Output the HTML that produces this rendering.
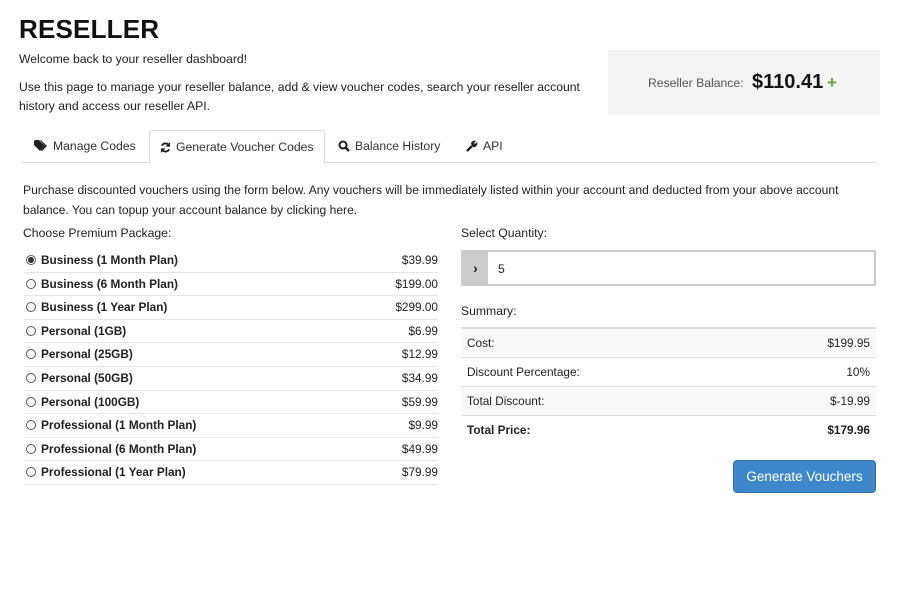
<!DOCTYPE html>
<html><head><style>
*{margin:0;padding:0;box-sizing:border-box}
body{width:900px;height:592px;background:#fff;font-family:"Liberation Sans",sans-serif;color:#222;font-size:12px;position:relative;overflow:hidden}
.a{position:absolute;white-space:nowrap}
h1{position:absolute;left:19px;top:14px;font-size:26px;font-weight:bold;color:#111;letter-spacing:0.2px}
.bal{position:absolute;left:608px;top:50px;width:272px;height:65px;background:#f4f4f4}
.tabs{position:absolute;left:22px;top:162px;width:854px;border-top:1px solid #ddd}
.tab{position:absolute;top:130px;height:33px;line-height:32px;font-size:12.2px;color:#333}
.tab svg{vertical-align:-2px;margin-right:5px}
.act{border:1px solid #ddd;border-bottom:1px solid #fff;background:#fff;border-radius:3px 3px 0 0;height:34px}
.row{position:absolute;left:24px;width:414px;height:23.6px;border-bottom:1px solid #e6e6e6;font-weight:bold;font-size:11.8px}
.row span.p{position:absolute;right:0;top:4px;font-weight:normal}
.row span.n{position:absolute;left:17px;top:4px}
.rad{position:absolute;left:2px;top:6px;width:10px;height:10px;border:1px solid #555;border-radius:50%}
.srow{position:absolute;left:461px;width:415px;height:29px;border-top:1px solid #ddd;font-size:11.8px}
.srow .l{position:absolute;left:6px;top:7px}.srow .r{position:absolute;right:6px;top:7px}
</style></head><body>
<h1>RESELLER</h1>
<div class="a" style="left:19px;top:52px;font-size:12.2px">Welcome back to your reseller dashboard!</div>
<div class="a" style="left:19px;top:78px;font-size:12.2px;line-height:19px">Use this page to manage your reseller balance, add &amp; view voucher codes, search your reseller account<br>history and access our reseller API.</div>
<div class="bal"><span class="a" style="left:40px;top:26px;font-size:12.2px;color:#555">Reseller Balance:</span><span class="a" style="left:144px;top:21px;font-size:20px;font-weight:bold;color:#111">$110.41</span><span class="a" style="left:219px;top:23px;font-size:17px;font-weight:bold;color:#5aa52a">+</span></div>
<div class="tabs"></div>
<div class="tab" style="left:34px"><svg width="14" height="12" viewBox="0 0 14 12"><path d="M0 1v4l6 6 5-5-6-6H1zM3 3a1 1 0 1 0 .01 0z" fill="#222"/><path d="M7 0l6 6-5 5-1-1 4-4-5-6z" fill="#222"/></svg>Manage Codes</div>
<div class="tab act" style="left:149px;width:176px;padding-left:10px"><svg width="11" height="11" viewBox="0 0 12 12"><path d="M10 4A4.5 4.5 0 0 0 2 4M2 8a4.5 4.5 0 0 0 8 0" stroke="#222" stroke-width="2" fill="none"/><path d="M11 0v5H6zM1 12V7h5z" fill="#222"/></svg>Generate Voucher Codes</div>
<div class="tab" style="left:338px"><svg width="12" height="12" viewBox="0 0 12 12"><circle cx="5" cy="5" r="3.5" stroke="#222" stroke-width="2" fill="none"/><path d="M7.5 7.5L11 11" stroke="#222" stroke-width="2.4"/></svg>Balance History</div>
<div class="tab" style="left:466px"><svg width="12" height="12" viewBox="0 0 12 12"><path d="M1 11L6 6" stroke="#222" stroke-width="2.4"/><path d="M5 4a3.5 3.5 0 0 1 5-3L8 3l1 1 2-2a3.5 3.5 0 0 1-4 5z" fill="#222"/></svg>API</div>
<div class="a" style="left:23px;top:180px;font-size:12.1px;line-height:20px">Purchase discounted vouchers using the form below. Any vouchers will be immediately listed within your account and deducted from your above account<br>balance. You can topup your account balance by clicking here.</div>
<div class="a" style="left:23px;top:226px;font-size:12.2px">Choose Premium Package:</div>
<div class="a" style="left:461px;top:226px;font-size:12.2px">Select Quantity:</div>
<div class="row" style="top:249px"><div class="rad"><div style="width:6px;height:6px;background:#333;border-radius:50%;margin:1px"></div></div><span class="n">Business (1 Month Plan)</span><span class="p">$39.99</span></div>
<div class="row" style="top:272.6px"><div class="rad"></div><span class="n">Business (6 Month Plan)</span><span class="p">$199.00</span></div>
<div class="row" style="top:296.2px"><div class="rad"></div><span class="n">Business (1 Year Plan)</span><span class="p">$299.00</span></div>
<div class="row" style="top:319.8px"><div class="rad"></div><span class="n">Personal (1GB)</span><span class="p">$6.99</span></div>
<div class="row" style="top:343.4px"><div class="rad"></div><span class="n">Personal (25GB)</span><span class="p">$12.99</span></div>
<div class="row" style="top:367px"><div class="rad"></div><span class="n">Personal (50GB)</span><span class="p">$34.99</span></div>
<div class="row" style="top:390.6px"><div class="rad"></div><span class="n">Personal (100GB)</span><span class="p">$59.99</span></div>
<div class="row" style="top:414.2px"><div class="rad"></div><span class="n">Professional (1 Month Plan)</span><span class="p">$9.99</span></div>
<div class="row" style="top:437.8px"><div class="rad"></div><span class="n">Professional (6 Month Plan)</span><span class="p">$49.99</span></div>
<div class="row" style="top:461.4px"><div class="rad"></div><span class="n">Professional (1 Year Plan)</span><span class="p">$79.99</span></div>
<div class="a" style="left:461px;top:250px;width:415px;height:36px;border:2px solid #ccc;background:#fff"><div style="position:absolute;left:0;top:0;width:25px;height:32px;background:#ccc;text-align:center;line-height:32px;font-weight:bold;font-size:14px">&#8250;</div><span class="a" style="left:35px;top:10px;font-size:12.2px">5</span></div>
<div class="a" style="left:461px;top:304px;font-size:12.2px">Summary:</div>
<div class="srow" style="top:327px;background:#f9f9f9;border-top:2px solid #ddd"><span class="l">Cost:</span><span class="r">$199.95</span></div>
<div class="srow" style="top:357px"><span class="l">Discount Percentage:</span><span class="r">10%</span></div>
<div class="srow" style="top:386px;background:#f9f9f9"><span class="l">Total Discount:</span><span class="r">$-19.99</span></div>
<div class="srow" style="top:415px;font-weight:bold"><span class="l">Total Price:</span><span class="r">$179.96</span></div>
<div class="a" style="left:733px;top:460px;width:143px;height:33px;background:#3f87cb;border:1px solid #2f73b5;border-radius:4px;color:#fff;font-size:13.5px;text-align:center;line-height:31px">Generate Vouchers</div>
</body></html>
